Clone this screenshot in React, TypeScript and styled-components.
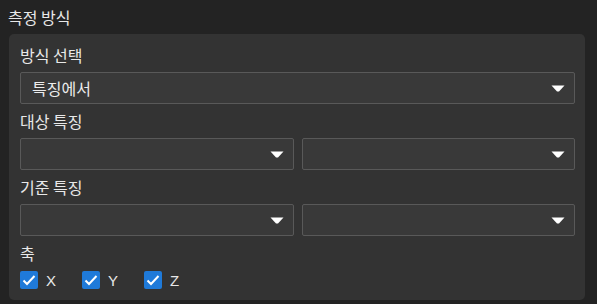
import React from "react";
import styled, { createGlobalStyle } from "styled-components";

const GlobalStyle = createGlobalStyle`
  html, body {
    margin: 0;
    padding: 0;
    background: #232323;
  }
  body {
    font-family: "Noto Sans CJK KR", "Noto Sans", sans-serif;
    color: #e8e8e8;
  }
`;

const Page = styled.div`
  width: 597px;
  height: 304px;
  padding-top: 6px;
  box-sizing: border-box;
  overflow: hidden;
`;

const Title = styled.div`
  height: 22px;
  line-height: 22px;
  font-size: 16px;
  padding-left: 8px;
  margin-bottom: 6px;
`;

const Panel = styled.div`
  margin-left: 9px;
  width: 576px;
  box-sizing: border-box;
  background: #333333;
  border-radius: 5px;
  padding: 10px 10px 11px 11px;
  display: flex;
  flex-direction: column;
  gap: 6px;
`;

const Group = styled.div`
  display: flex;
  flex-direction: column;
`;

const Label = styled.div`
  height: 22px;
  line-height: 22px;
  font-size: 16px;
  margin-bottom: 6px;
`;

const Row = styled.div`
  display: grid;
  grid-template-columns: 1fr 1fr;
  gap: 8px;
`;

const SelectBox = styled.div`
  height: 32px;
  box-sizing: border-box;
  background: #393939;
  border: 1px solid #595959;
  border-radius: 2px;
  display: flex;
  align-items: center;
  padding: 0 9px 0 11px;
  font-size: 16px;
  color: #ececec;
`;

const Value = styled.span`
  flex: 1;
`;

const Caret = styled.svg`
  width: 14px;
  height: 7px;
  flex: none;
`;

const Checks = styled.div`
  display: flex;
  margin-top: 1px;
`;

const CheckItem = styled.label`
  width: 62px;
  display: flex;
  align-items: center;
  gap: 8px;
  font-family: "Liberation Sans", Arial, sans-serif;
  font-size: 15px;
`;

const Box = styled.span`
  width: 18px;
  height: 18px;
  border-radius: 2px;
  background: #1f7ad9;
  display: flex;
  align-items: center;
  justify-content: center;
`;

const Select = ({ value }: { value?: string }) => (
  <SelectBox>
    <Value>{value}</Value>
    <Caret viewBox="0 0 14 7">
      <path d="M0.5 0.5 H13.5 L8 6.5 H6 Z" fill="#ffffff" />
    </Caret>
  </SelectBox>
);

const Check = ({ label }: { label: string }) => (
  <CheckItem>
    <Box>
      <svg width="14" height="12" viewBox="0 0 14 12">
        <path d="M1.5 6.5 L5 10 L12.5 2" fill="none" stroke="#fff" strokeWidth="2" />
      </svg>
    </Box>
    {label}
  </CheckItem>
);

export default function App() {
  return (
    <Page>
      <GlobalStyle />
      <Title>측정 방식</Title>
      <Panel>
        <Group>
          <Label>방식 선택</Label>
          <Select value="특징에서" />
        </Group>
        <Group>
          <Label>대상 특징</Label>
          <Row>
            <Select />
            <Select />
          </Row>
        </Group>
        <Group>
          <Label>기준 특징</Label>
          <Row>
            <Select />
            <Select />
          </Row>
        </Group>
        <Group>
          <Label>축</Label>
          <Checks>
            <Check label="X" />
            <Check label="Y" />
            <Check label="Z" />
          </Checks>
        </Group>
      </Panel>
    </Page>
  );
}
